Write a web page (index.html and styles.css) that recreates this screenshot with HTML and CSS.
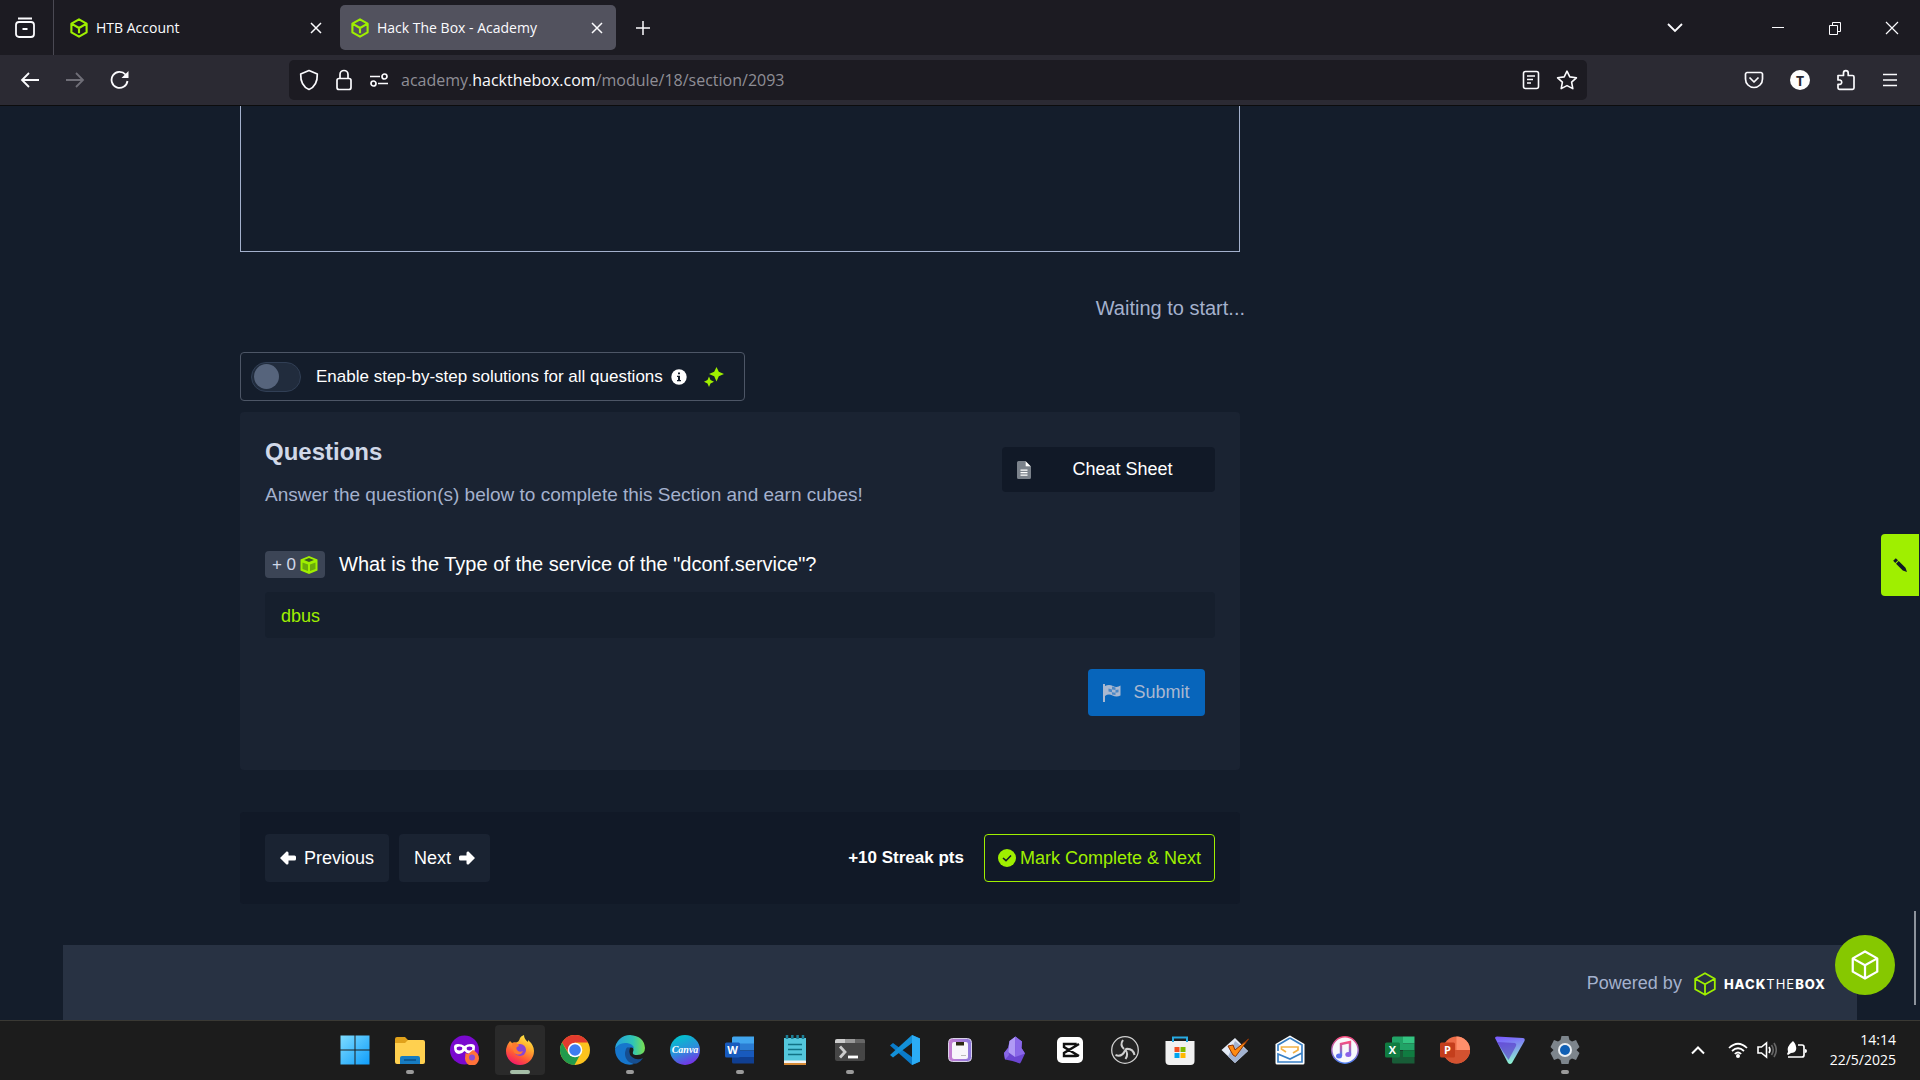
FILE: index.html
```html
<!DOCTYPE html>
<html lang="en">
<head>
    <meta charset="UTF-8">
    <meta name="viewport" content="width=device-width, initial-scale=1.0">
    <title>Hack The Box - Academy</title>
    <link rel="stylesheet" href="styles.css">
</head>
<body>

    <!-- shared shapes -->
    <svg class="defs" aria-hidden="true">
        <symbol id="cube" viewBox="0 0 22 24">
            <path d="M11 1.5 20.3 6.7V17.3L11 22.5 1.7 17.3V6.7ZM1.7 6.7 11 12 20.3 6.7M11 12V18.5" fill="none" stroke="currentColor" stroke-width="2.6" stroke-linejoin="round"/>
        </symbol>
        <symbol id="cube-thin" viewBox="0 0 22 24">
            <path d="M11 1.2 20.8 6.7V17.3L11 22.8 1.2 17.3V6.7ZM1.2 6.7 11 12.2 20.8 6.7M11 12.2V22.8" fill="none" stroke="currentColor" stroke-width="1.8" stroke-linejoin="round"/>
        </symbol>
        <symbol id="close" viewBox="0 0 14 14">
            <path d="M2 2 12 12M12 2 2 12" fill="none" stroke="currentColor" stroke-width="1.5"/>
        </symbol>
    </svg>

    <header class="browser">
        <div class="tabs">
            <button class="view-btn" aria-label="Firefox View">
                <svg width="22" height="22" viewBox="0 0 22 22" fill="none" stroke="currentColor" stroke-width="1.8"><path d="M4 1.5H18M8.500 12H13.500"/><rect x="2" y="5" width="18" height="15" rx="3"/></svg>
            </button>
            <div class="tab">
                <svg class="favicon" width="18" height="20"><use href="#cube"/></svg>
                <span>HTB Account</span>
                <button aria-label="Close tab"><svg width="14" height="14"><use href="#close"/></svg></button>
            </div>
            <div class="tab active">
                <svg class="favicon" width="18" height="20"><use href="#cube"/></svg>
                <span>Hack The Box - Academy</span>
                <button aria-label="Close tab"><svg width="14" height="14"><use href="#close"/></svg></button>
            </div>
            <button class="new-tab" aria-label="New tab">
                <svg width="16" height="16" viewBox="0 0 16 16" stroke="currentColor" stroke-width="1.5"><path d="M8 1V15M1 8H15"/></svg>
            </button>
            <div class="window-buttons">
                <button aria-label="List all tabs"><svg width="18" height="12" viewBox="0 0 18 12" fill="none" stroke="currentColor" stroke-width="1.8"><path d="M2 2 9 9 16 2"/></svg></button>
                <button aria-label="Minimise"><svg width="14" height="14" viewBox="0 0 14 14" stroke="currentColor"><path d="M1 6.500H13"/></svg></button>
                <button aria-label="Restore"><svg width="14" height="14" viewBox="0 0 14 14" fill="none" stroke="currentColor"><path d="M1.500 4.500H9.500V13.500H1.500ZM4.500 4.500V1.500H12.500V10.500H9.500"/></svg></button>
                <button aria-label="Close"><svg width="14" height="14" viewBox="0 0 14 14" stroke="currentColor" stroke-width="1.200"><path d="M1 1 13 13M13 1 1 13"/></svg></button>
            </div>
        </div>
        <div class="toolbar">
            <div class="nav-buttons">
                <button aria-label="Back"><svg width="20" height="20" viewBox="0 0 20 20" fill="none" stroke="currentColor" stroke-width="1.8"><path d="M19 10H2M9 3 2 10 9 17"/></svg></button>
                <button class="dim" aria-label="Forward"><svg width="20" height="20" viewBox="0 0 20 20" fill="none" stroke="currentColor" stroke-width="1.8"><path d="M1 10H18M11 3 18 10 11 17"/></svg></button>
                <button aria-label="Reload"><svg width="20" height="20" viewBox="0 0 20 20" fill="none" stroke="currentColor" stroke-width="1.8"><path d="M17.500 11A8 8 0 1 1 15.500 4.500L17 6"/><path d="M18.500 1V8H11.500Z" fill="currentColor" stroke="none"/></svg></button>
            </div>
            <div class="url-bar">
                <svg width="20" height="22" viewBox="0 0 20 22" fill="none" stroke="currentColor" stroke-width="1.7" stroke-linejoin="round"><path d="M10 1.500 18.300 5C18.500 12 16 18 10 20.500 4 18 1.500 12 1.700 5Z"/></svg>
                <svg class="lock" width="18" height="22" viewBox="0 0 18 22" fill="none" stroke="currentColor" stroke-width="1.7"><rect x="2" y="9.500" width="14" height="11" rx="2"/><path d="M5 9.500V5.500A4 4 0 0 1 13 5.500V9.500"/></svg>
                <svg class="perms" width="20" height="16" viewBox="0 0 20 16" fill="none" stroke="currentColor" stroke-width="1.7"><path d="M1 4.500H11M9 11.500H19"/><circle cx="15.500" cy="4.500" r="2.500"/><circle cx="4.500" cy="11.500" r="2.500"/></svg>
                <span class="url">academy.<b>hackthebox.com</b>/module/18/section/2093</span>
                <button aria-label="Reader view"><svg width="18" height="20" viewBox="0 0 18 20" fill="none" stroke="currentColor" stroke-width="1.6"><rect x="1.500" y="1.500" width="15" height="17" rx="2"/><path d="M5 6H13M5 9.500H11M5 13H9"/></svg></button>
                <button aria-label="Bookmark"><svg width="22" height="20" viewBox="0 0 22 20" fill="none" stroke="currentColor" stroke-width="1.6" stroke-linejoin="round"><path d="M11 1.200 13.800 6.900 20.400 7.800 15.600 12.200 16.800 18.600 11 15.600 5.200 18.600 6.400 12.200 1.600 7.800 8.200 6.900Z"/></svg></button>
            </div>
            <div class="tools">
                <button aria-label="Pocket"><svg width="20" height="18" viewBox="0 0 20 18" fill="none" stroke="currentColor" stroke-width="1.7" stroke-linejoin="round"><path d="M3 1.500H17A2 2 0 0 1 18.500 3V8A8.500 8.500 0 0 1 1.500 8V3A2 2 0 0 1 3 1.500ZM5.500 6.500 10 11 14.500 6.500"/></svg></button>
                <button class="account" aria-label="Account">T</button>
                <button aria-label="Extensions"><svg width="20" height="22" viewBox="0 0 20 22" fill="none" stroke="currentColor" stroke-width="1.7" stroke-linejoin="round"><path d="M2 6.500H7.500V4A2.300 2.300 0 0 1 12.200 4V6.500H16.500Q18 6.500 18 8V19Q18 20.300 16.500 20.300H3.500Q2 20.300 2 19V15.300H4A2.200 2.200 0 0 0 4 11H2Z"/></svg></button>
                <button aria-label="Menu"><svg width="16" height="16" viewBox="0 0 16 16" stroke="currentColor" stroke-width="1.500"><path d="M1 2.500H15M1 8H15M1 13.500H15"/></svg></button>
            </div>
        </div>
    </header>

    <main class="page">
        <div class="content">
            <div class="instance-frame"></div>
            <p class="waiting">Waiting to start...</p>

            <label class="solutions" for="solutions">
                <input type="checkbox" id="solutions">
                <span>Enable step-by-step solutions for all questions</span>
                <svg class="info" width="16" height="16" viewBox="0 0 16 16"><circle cx="8" cy="8" r="7.700" fill="#fff"/><path d="M7 3.500H9V5.300H7ZM6 6.700H9V11H10V12.300H6V11H7V8H6Z" fill="#141d2b"/></svg>
                <svg width="20" height="20" viewBox="0 0 20 20" fill="#9fef00"><path d="M12.500 0 14.800 4.700 20 7 14.800 9.300 12.500 14.500 10.200 9.300 5 7 10.200 4.700ZM5 9.500 6.500 13 10 14.700 6.500 16.400 5 20 3.500 16.400 0 14.700 3.500 13Z"/></svg>
            </label>

            <section class="questions">
                <div class="questions-head">
                    <div>
                        <h2>Questions</h2>
                        <p>Answer the question(s) below to complete this Section and earn cubes!</p>
                    </div>
                    <button class="cheat-sheet">
                        <svg width="14" height="18" viewBox="0 0 14 18"><path d="M1.500 0H8.500V5.500H14V16.500Q14 18 12.500 18H1.500Q0 18 0 16.500V1.500Q0 0 1.500 0Z" fill="#7b828b"/><path d="M8.500 0 14 5.500H8.500ZM3.500 8.500H10.500V9.700H3.500ZM3.500 11H10.500V12.200H3.500ZM3.500 13.500H10.500V14.700H3.500Z" fill="#fff"/></svg>
                        <span>Cheat Sheet</span>
                    </button>
                </div>
                <div class="question">
                    <span class="cubes">+ 0
                        <svg width="18" height="18" viewBox="0 0 18 18"><path d="M9 0 17.500 3.500V14.500L9 18 .5 14.500V3.500Z" fill="#9fef00"/><path d="M9 2 14 4 9 6 4 4Z" fill="#3c5a20"/><path d="M2.500 6.500 8 8.500V15L2.500 13ZM15.500 6.500 10 8.500V15L15.500 13Z" fill="#6bab0b"/></svg>
                    </span>
                    <label for="answer">What is the Type of the service of the "dconf.service"?</label>
                </div>
                <input class="answer" type="text" id="answer" value="dbus">
                <button class="submit">
                    <svg width="18" height="18" viewBox="0 0 18 18" fill="currentColor"><path d="M0 0H2V18H0Z"/><path d="M2 2Q6 0 10 2T17.500 1.500V11.500Q13.500 13.500 9.500 11.500T2 12Z"/><path d="M5.500 4.500 9 5.500V8.300L5.500 7.500ZM9 2.500 12.500 3.500V6L9 5.500ZM12.500 6 15.500 5.500V8.300L12.500 8.700ZM9 8.300 12.500 8.700V11L9 10.500Z" fill="#0b68bf" opacity=".6"/></svg>
                    Submit
                </button>
            </section>

            <nav class="section-nav">
                <button>
                    <svg width="16" height="14" viewBox="0 0 16 14" fill="currentColor"><path d="M0 7 6.500 .5Q8.500 0 8.500 2V4.500H14.500Q16 4.500 16 6V8Q16 9.500 14.500 9.500H8.500V12Q8.500 14 6.500 13.500Z"/></svg>
                    Previous
                </button>
                <button>
                    Next
                    <svg width="16" height="14" viewBox="0 0 16 14" fill="currentColor"><path d="M16 7 9.500 .5Q7.500 0 7.500 2V4.500H1.500Q0 4.500 0 6V8Q0 9.500 1.500 9.500H7.500V12Q7.500 14 9.500 13.500Z"/></svg>
                </button>
                <span class="streak">+10 Streak pts</span>
                <button class="complete">
                    <svg width="18" height="18" viewBox="0 0 18 18"><circle cx="9" cy="9" r="9" fill="#9fef00"/><path d="M5 9 8 11.700 13 6.500" fill="none" stroke="#111927" stroke-width="1.600"/></svg>
                    Mark Complete &amp; Next
                </button>
            </nav>
        </div>

        <footer>
            <span>Powered by</span>
            <a href="#" class="brand">
                <svg width="22" height="24"><use href="#cube-thin"/></svg>
                <span><b>HACK</b>THE<b>BOX</b></span>
            </a>
        </footer>

        <button class="notes" aria-label="Notes">
            <svg width="16" height="16" viewBox="0 0 16 16" fill="#111927"><path d="M1.200 3.800 3.800 1.200 6 3.200 3.300 6ZM4 6.700 6.700 4 13.500 10.700 15 15 10.800 13.500Z"/></svg>
        </button>
        <button class="help" aria-label="Help">
            <svg width="28" height="30"><use href="#cube-thin"/></svg>
        </button>
        <div class="scroll-thumb"></div>
    </main>

    <div class="taskbar">
        <div class="apps">
            <button aria-label="Start"><svg viewBox="0 0 30 30"><defs><linearGradient id="win" x1="0" y1="0" x2="1" y2="1"><stop stop-color="#7edcff"/><stop offset="1" stop-color="#0f9dfa"/></linearGradient></defs><path d="M.5 .5H14.500V14.500H.5ZM15.500 .5H29.500V14.500H15.500ZM.5 15.500H14.500V29.500H.5ZM15.500 15.500H29.500V29.500H15.500Z" fill="url(#win)"/></svg></button>
            <button class="open" aria-label="File Explorer"><svg viewBox="0 0 30 30"><path d="M0 4Q0 2 2 2H10L13 5H20V12H0Z" fill="#e0a11b"/><path d="M0 8H10L13 5H28Q30 5 30 7V27Q30 29 28 29H2Q0 29 0 27Z" fill="#ffd04f"/><path d="M5 29V23Q5 21 7 21H23Q25 21 25 23V29Z" fill="#177cc2"/><path d="M9 25H21" stroke="#0b4f86" stroke-width="1.500"/></svg></button>
            <button aria-label="Firefox Private Browsing"><svg viewBox="0 0 30 30"><circle cx="14.500" cy="15" r="14.500" fill="#7a09cf"/><path d="M4 12Q4 9 8 9 12 9 14.500 11 17 9 21 9 25 9 25 12 25 19 20 19 17 19 14.500 16 12 19 9 19 4 19 4 12Z" fill="#fff"/><ellipse cx="9.500" cy="13.500" rx="2.800" ry="1.900" fill="#7a09cf"/><ellipse cx="19.500" cy="13.500" rx="2.800" ry="1.900" fill="#7a09cf"/><path d="M15.500 18 18 19 23 15Q29 18 29 23.500A7 7 0 0 1 15 23.500Z" fill="#ff7139"/><circle cx="22" cy="22.500" r="3" fill="#8a4bd6"/></svg></button>
            <button class="open current" aria-label="Firefox"><svg viewBox="0 0 30 30"><defs><linearGradient id="fox" x1=".8" y1="0" x2=".3" y2="1"><stop stop-color="#fff04a"/><stop offset=".35" stop-color="#ffb02e"/><stop offset=".7" stop-color="#ff5a36"/><stop offset="1" stop-color="#f5156c"/></linearGradient></defs><path d="M5 6 7 8Q10 7 11 7.500 14 7 15 3 16 1 19 0 19 4 23 7L23 5Q29 10 29 16A14 14 0 0 1 1 16Q1 11 5 6Z" fill="url(#fox)"/><circle cx="15" cy="15" r="6" fill="#8946d4"/><path d="M7 8Q12 7 14 11 10 12 12 15 14 18 18 16 16 21 11 19 7 17 7 8Z" fill="#ff7a2e"/></svg></button>
            <button aria-label="Chrome"><svg viewBox="0 0 30 30"><circle cx="15" cy="15" r="15" fill="#fcc31e"/><path d="M2 7.500A15 15 0 0 1 28 7.500H15L9 18.500Z" fill="#e33b2e"/><path d="M2 7.500 8.500 18.700 15 22.500 13.700 30A15 15 0 0 1 2 7.500Z" fill="#219a4c"/><path d="M20.500 19 14.500 30Q10 28 10 22Z" fill="#219a4c"/><circle cx="15" cy="15" r="7.300" fill="#fff"/><circle cx="15" cy="15" r="5.800" fill="#3d7df0"/></svg></button>
            <button class="open" aria-label="Edge"><svg viewBox="0 0 30 30"><defs><linearGradient id="edge"><stop stop-color="#249fe0"/><stop offset=".6" stop-color="#2fc5b5"/><stop offset="1" stop-color="#7be04f"/></linearGradient></defs><path d="M0 14A15 15 0 0 1 15 0Q29 1 30 13 30 20 22 20 17 20 18 17 20 12 14 10 5 8 0 14Z" fill="url(#edge)"/><path d="M0 14Q4 7 12 8 18 9 19 13 13 11 11 17 10 25 19 29 12 31 6 27 0 22 0 14Z" fill="#1676cc"/><path d="M11 14Q8 22 14 27 22 32 28 23 22 26 17 22 13 19 15 13 12 11 11 14Z" fill="#164f91"/></svg></button>
            <button aria-label="Canva"><svg viewBox="0 0 30 30"><defs><linearGradient id="canva" x1=".3" y1="0" x2=".7" y2="1"><stop stop-color="#00c4cc"/><stop offset=".5" stop-color="#2b8fdb"/><stop offset="1" stop-color="#7d2ae8"/></linearGradient></defs><circle cx="15" cy="15" r="15" fill="url(#canva)"/><text x="15" y="18" class="canva-text">Canva</text></svg></button>
            <button class="open" aria-label="Word"><svg viewBox="0 0 30 30"><path d="M7 3Q7 1.500 8.500 1.500H29V9H7Z" fill="#41a5ee"/><path d="M7 8.500H29V15.500H7Z" fill="#2b7cd3"/><path d="M7 15.500H29V22H7Z" fill="#185abd"/><path d="M7 22H29V28.500H8.500Q7 28.500 7 27Z" fill="#103f91"/><rect y="7.500" width="15" height="15" rx="1.500" fill="#185abd"/><text x="7.500" y="19" class="office-text">W</text></svg></button>
            <button aria-label="Notepad"><svg viewBox="0 0 30 30"><path d="M4 26H26V30H4Z" fill="#d68a35"/><path d="M4 3H26V25L25 28H4Z" fill="#54c7dc"/><path d="M4 25.500H26V28H4Z" fill="#f4f4f4"/><path d="M8 9.500H22M8 14.500H22M8 19.500H22" stroke="#117285" stroke-width="1.600"/><path d="M7 0V4M12.300 0V4M17.600 0V4M23 0V4" stroke="#1c7f97" stroke-width="2.500"/></svg></button>
            <button class="open" aria-label="Terminal"><svg viewBox="0 0 30 30"><rect y="4" width="30" height="22" rx="2" fill="#464646"/><path d="M0 8V6Q0 4 2 4H10V8Z" fill="#ccc"/><path d="M10 4H20V8H10Z" fill="#999"/><path d="M20 4H28Q30 4 30 6V8H20Z" fill="#666"/><path d="M5 11.500 10 17 5 22.500" fill="none" stroke="#ccc" stroke-width="2.800"/><path d="M13 22H23" stroke="#fff" stroke-width="2.800"/></svg></button>
            <button aria-label="Visual Studio Code"><svg viewBox="0 0 30 30"><path d="M22 0 30 3.500V26.500L22 30 0 10.500 3 8 22 22Z" fill="#0a7bc9"/><path d="M22 0V8L3 22.500 0 20Z" fill="#1390d8"/><path d="M22 0 30 3.500V26.500L22 30Z" fill="#2bacf5"/></svg></button>
            <button aria-label="Emulator"><svg viewBox="0 0 30 30"><defs><linearGradient id="emu"><stop stop-color="#c77dd0"/><stop offset="1" stop-color="#8a78dc"/></linearGradient></defs><rect x="3.500" y="3.500" width="23" height="23" rx="4" fill="url(#emu)" stroke="#d9d2e8"/><rect x="7" y="7" width="16" height="17" rx="2" fill="#f7f5fa"/><path d="M11 7H19V10.500H11Z" fill="#2b2813"/><path d="M16 20.500H21" stroke="#bbb"/></svg></button>
            <button aria-label="Obsidian"><svg viewBox="0 0 30 30"><path d="M15.500 1.500 22 6.500 21.500 13 25 18.500 21 27 20 28.500 12.500 26 5 24.500 4 18 8 13 9.500 6Z" fill="#6c46d2"/><path d="M15.500 1.500 9.500 6 8 17 15 22Z" fill="#b09af5"/><path d="M15.500 1.500 22 6.500 21.500 13 25 18.500 15 22Z" fill="#8a68e8"/><path d="M4 18 8 13 9 20 5 24.500Z" fill="#8767e5"/></svg></button>
            <button aria-label="CapCut"><svg viewBox="0 0 30 30"><rect x="2" y="2" width="26" height="26" rx="5" fill="#fff"/><path d="M24 9 9 18V21H20.500V18.500M24 21 9 12V9H20.500V11.500" fill="none" stroke="#111" stroke-width="2.400"/></svg></button>
            <button aria-label="OBS Studio"><svg viewBox="0 0 30 30"><circle cx="15" cy="15" r="13.300" fill="#242424" stroke="#d0d0d0" stroke-width="1.300"/><path d="M13 5Q9.500 10 14 14M5.500 20Q12 22.500 15 15.500M24.500 20Q23 13 15.500 14M15 14Q19 19 15.500 24" fill="none" stroke="#d0d0d0" stroke-width="2"/></svg></button>
            <button aria-label="Microsoft Store"><svg viewBox="0 0 30 30"><path d="M.5 6H29.500V26Q29.500 30 25.500 30H4.500Q.5 30 .5 26Z" fill="#f1f1f1"/><path d="M8 7V2.500H22V7" fill="none" stroke="#27a9e1" stroke-width="2"/><path d="M9.500 12H14.500V17H9.500Z" fill="#f25022"/><path d="M15.500 12H20.500V17H15.500Z" fill="#7fba00"/><path d="M9.500 18H14.500V23H9.500Z" fill="#00a4ef"/><path d="M15.500 18H20.500V23H15.500Z" fill="#ffb900"/></svg></button>
            <button aria-label="Tasks"><svg viewBox="0 0 30 30"><path d="M15 3 28 16 15 28 1.500 15Z" fill="#e4ebf6"/><path d="M15 6 28 16 15 28 8 21.500Z" fill="#a3b3d0"/><path d="M8 11 13 10 15 15 28.500 4 15.500 21.500 13 20Z" fill="#ff8a10" stroke="#8e3507"/></svg></button>
            <button aria-label="Mail"><svg viewBox="0 0 30 30"><path d="M15 .5 29.500 9V28Q29.500 29.500 28 29.500H2Q.5 29.500 .5 28V9Z" fill="#fff"/><path d="M15 3 27 10V27H3V19L15 24 27 18M3 16V10L15 3" fill="none" stroke="#3980c6" stroke-width="1.700"/><path d="M11 17 6.500 14V12H23V15L18 18" fill="none" stroke="#f4b248" stroke-width="1.700"/></svg></button>
            <button aria-label="iTunes"><svg viewBox="0 0 30 30"><defs><linearGradient id="tune" x1="0" y1="0" x2="0" y2="1"><stop stop-color="#f94d7f"/><stop offset="1" stop-color="#4b7ff2"/></linearGradient></defs><circle cx="15" cy="15" r="13.200" fill="#f8f8fb" stroke="url(#tune)" stroke-width="1.500"/><path d="M11 21V9L20 7V19" fill="none" stroke="url(#tune)" stroke-width="2.400"/><ellipse cx="9" cy="21" rx="3" ry="2.500" fill="#5a6ff0"/><ellipse cx="18.300" cy="19.500" rx="3" ry="2.500" fill="#8d62e8"/></svg></button>
            <button aria-label="Excel"><svg viewBox="0 0 30 30"><path d="M7 3Q7 1.500 8.500 1.500H18V15H7Z" fill="#21a366"/><path d="M18 1.500H29.500V8.500H18Z" fill="#33c481"/><path d="M18 8.500H29.500V15.500H18Z" fill="#21a366"/><path d="M7 15.500H29.500V28.500H8.500Q7 28.500 7 27Z" fill="#185c37"/><path d="M18 15.500H29.500V22H18Z" fill="#107c41"/><rect y="7.500" width="15" height="15" rx="1.500" fill="#107c41"/><text x="7.500" y="19" class="office-text">X</text></svg></button>
            <button aria-label="PowerPoint"><svg viewBox="0 0 30 30"><circle cx="16.500" cy="15" r="13.500" fill="#ed6c47"/><path d="M16.500 1.500A13.500 13.500 0 0 1 30 15H16.500Z" fill="#ff8f6b"/><path d="M3 15H30A13.500 13.500 0 0 1 3 15Z" fill="#d35230"/><rect y="7.500" width="15" height="15" rx="1.500" fill="#c43e1c"/><text x="7.500" y="19" class="office-text">P</text></svg></button>
            <button aria-label="Proton VPN"><svg viewBox="0 0 30 30"><defs><linearGradient id="vpn" x1=".3" y1="0" x2=".5" y2="1"><stop stop-color="#7a5cff"/><stop offset="1" stop-color="#8df5cf"/></linearGradient></defs><path d="M0 3Q0 1.500 2 1.500L28 3Q30.500 3.500 29.500 6L17 28Q15 30 13 28Z" fill="url(#vpn)"/><path d="M2 7 20 8Q22 9 21 11L13.500 25Z" fill="#5535c4" opacity=".6"/></svg></button>
            <button class="open" aria-label="Settings"><svg viewBox="0 0 30 30"><path d="M11.500 1H18.500L19.500 5 22 6.500 26 5 29.500 12 26.500 15 29.500 18 26 25 22 23.500 19.500 25 18.500 29H11.500L10.500 25 8 23.500 4 25 .5 18 3.500 15 .5 12 4 5 8 6.500 10.500 5Z" fill="#7d858c"/><circle cx="15" cy="15" r="7" fill="#e9eef2"/><circle cx="15" cy="15" r="5" fill="#0f5fb4"/></svg></button>
        </div>
        <div class="tray">
            <svg width="16" height="12" viewBox="0 0 16 12" fill="none" stroke="currentColor" stroke-width="2"><path d="M2 9.500 8 3.500 14 9.500"/></svg>
            <svg class="wifi" width="20" height="16" viewBox="0 0 20 16" fill="none" stroke="currentColor" stroke-width="1.700"><path d="M1 6Q10-2.500 19 6M4 9Q10 3.500 16 9M6.800 12Q10 9 13.200 12"/><circle cx="10" cy="14" r="2" fill="currentColor" stroke="none"/></svg>
            <svg width="20" height="18" viewBox="0 0 20 18" fill="none" stroke="currentColor" stroke-width="1.600"><path d="M1 6H4.500L9.500 2V16L4.500 12H1Z"/><path d="M12 6Q14 9 12 12"/><path d="M14.500 4Q18 9 14.500 14M17 2Q21.500 9 17 16" stroke="#666"/></svg>
            <svg width="22" height="18" viewBox="0 0 22 18"><path d="M12 4H16Q18 4 18 6V14Q18 16 16 16H2" fill="none" stroke="currentColor" stroke-width="1.700"/><path d="M19 8Q21 8 21 10T19 12ZM7 0Q11 4 10 9 9 12 5 12L2 14 1 13 2 11Q0 6 7 0Z" fill="currentColor"/></svg>
            <div class="clock">14:14<br>22/5/2025</div>
        </div>
    </div>

</body>
</html>
```
FILE: styles.css
```css
* {
    box-sizing: border-box;
}

body {
    margin: 0;
    height: 100vh;
    display: flex;
    flex-direction: column;
    overflow: hidden;
    background-color: #141d2b;
    color: #a4b1cd;
    font-family: "Liberation Sans", Arial, sans-serif;
    font-size: 18px;
}

button {
    display: flex;
    align-items: center;
    justify-content: center;
    padding: 0;
    border: none;
    background: none;
    color: inherit;
    font: inherit;
    cursor: pointer;
}

svg {
    display: block;
    flex: none;
}

h2,
p {
    margin: 0;
}

.defs {
    position: absolute;
    width: 0;
    height: 0;
}

/* browser chrome */
.browser {
    color: #fbfbfe;
    font-family: "Open Sans", "Noto Sans", sans-serif;
    font-size: 14px;
    border-bottom: 1px solid #0c0c0d;
}

.tabs {
    display: flex;
    align-items: center;
    height: 55px;
    background-color: #1c1b22;
}

.view-btn {
    width: 54px;
    height: 55px;
    padding-right: 4px;
    border-right: 1px solid #4a4953;
}

.tab {
    display: flex;
    align-items: center;
    gap: 8px;
    width: 276px;
    height: 45px;
    margin-left: 5px;
    padding: 0 12px 0 11px;
    border-radius: 5px;
}

.tab.active {
    background-color: #52525e;
}

.tab span {
    flex: 1;
}

.favicon {
    color: #9fef00;
}

.new-tab {
    width: 44px;
    height: 40px;
    margin-left: 5px;
}

.window-buttons {
    display: flex;
    margin-left: auto;
}

.window-buttons button {
    width: 57px;
    height: 55px;
}

.window-buttons button:first-child {
    margin-right: 46px;
}

.toolbar {
    display: flex;
    align-items: center;
    height: 50px;
    padding-left: 20px;
    background-color: #2b2a33;
}

.nav-buttons {
    display: flex;
    gap: 25px;
    width: 269px;
}

.dim {
    color: #6f6e77;
}

.url-bar {
    display: flex;
    align-items: center;
    flex: 1;
    gap: 16px;
    height: 40px;
    padding: 0 9px 0 10px;
    border-radius: 5px;
    background-color: #1c1b22;
}

.url {
    flex: 1;
    margin-left: -4px;
    color: #8f8e96;
    font-size: 16px;
}

.url b {
    color: #fbfbfe;
    font-weight: normal;
}

.tools {
    display: flex;
    align-items: center;
    justify-content: flex-end;
    gap: 26px;
    width: 333px;
    padding-right: 22px;
}

.account {
    width: 20px;
    height: 20px;
    border-radius: 50%;
    background-color: #fff;
    color: #2b2a33;
    font-size: 14px;
    font-weight: bold;
}

/* academy page */
.page {
    position: relative;
    display: flex;
    flex-direction: column;
    flex: 1;
    min-height: 0;
    overflow: hidden;
}

.content {
    margin: 0 680px 0 240px;
}

.instance-frame {
    height: 146px;
    border: 1px solid #a4b1cd;
    border-top: none;
}

.waiting {
    margin: 41px -5px 0 0;
    text-align: right;
    font-size: 20px;
    line-height: 30px;
}

.solutions {
    display: flex;
    align-items: center;
    width: fit-content;
    height: 49px;
    margin-top: 29px;
    padding: 0 20px 0 10px;
    border: 1px solid #4d5666;
    border-radius: 4px;
    color: #fff;
    font-size: 17px;
}

.solutions input {
    appearance: none;
    display: flex;
    align-items: center;
    width: 50px;
    height: 30px;
    margin: 0 15px 0 0;
    padding: 0 2px;
    border: 1px solid #313f55;
    border-radius: 15px;
    background-color: #212c3d;
}

.solutions input::before {
    content: "";
    width: 25px;
    height: 25px;
    border-radius: 50%;
    background-color: #56647c;
}

.solutions input:checked {
    justify-content: flex-end;
}

.info {
    margin: 0 17px 0 8px;
}

.questions {
    display: flex;
    flex-direction: column;
    margin-top: 11px;
    padding: 25px 25px 54px;
    border-radius: 4px;
    background-color: #1a2332;
}

.questions-head {
    display: flex;
    align-items: flex-start;
    justify-content: space-between;
}

.questions h2 {
    color: #d0d8e8;
    font-size: 24px;
    line-height: 30px;
}

.questions p {
    margin-top: 14px;
    font-size: 19px;
    line-height: 28px;
}

.cheat-sheet {
    width: 213px;
    height: 45px;
    margin-top: 10px;
    padding: 0 15px;
    border-radius: 4px;
    background-color: #111927;
    color: #fff;
}

.cheat-sheet span {
    flex: 1;
    padding-left: 14px;
}

.question {
    display: flex;
    align-items: center;
    gap: 14px;
    margin-top: 42px;
    color: #fff;
    font-size: 20px;
    line-height: 27px;
}

.cubes {
    display: flex;
    align-items: center;
    justify-content: center;
    gap: 4px;
    width: 60px;
    border-radius: 4px;
    background-color: #3c4556;
    color: #d0d8e8;
    font-size: 17px;
}

.answer {
    height: 46px;
    margin-top: 14px;
    padding: 2px 16px 0;
    border: none;
    border-radius: 4px;
    background-color: #161f2d;
    color: #9fef00;
    font: inherit;
}

.submit {
    align-self: flex-end;
    gap: 12px;
    width: 117px;
    height: 47px;
    margin: 31px 10px 0 0;
    border-radius: 4px;
    background-color: #0765bb;
    color: #a9b8d0;
}

.section-nav {
    display: flex;
    align-items: center;
    gap: 10px;
    margin-top: 42px;
    padding: 22px 25px;
    border-radius: 4px;
    background-color: #111927;
    color: #fff;
}

.section-nav button {
    gap: 8px;
    height: 48px;
    padding: 0 15px;
    border-radius: 4px;
    background-color: #1a2332;
}

.streak {
    margin: 0 10px 0 auto;
    font-size: 17px;
    font-weight: bold;
}

.section-nav .complete {
    gap: 4px;
    padding: 0 13px;
    border: 1px solid #9fef00;
    background: none;
    color: #9fef00;
}

footer {
    display: flex;
    align-items: center;
    justify-content: flex-end;
    gap: 12px;
    flex: 1;
    margin: 41px 63px 0;
    padding: 2px 31px 0 0;
    background-color: #283243;
}

.brand {
    display: flex;
    align-items: center;
    gap: 8px;
    color: #9fef00;
    text-decoration: none;
}

.brand span {
    color: #fff;
    font-family: Inter, sans-serif;
    font-size: 13px;
    letter-spacing: 1px;
}

.brand b {
    font-weight: 800;
}

.notes {
    position: absolute;
    top: 428px;
    right: 1px;
    width: 38px;
    height: 62px;
    border-radius: 4px 0 0 4px;
    background-color: #9fef00;
}

.help {
    position: absolute;
    right: 25px;
    bottom: 25px;
    width: 60px;
    height: 60px;
    border-radius: 50%;
    background-color: #86c800;
    color: #fff;
}

.scroll-thumb {
    position: absolute;
    right: 4px;
    bottom: 15px;
    width: 2px;
    height: 94px;
    background-color: #8d939c;
}

/* windows taskbar */
.taskbar {
    display: grid;
    grid-template-columns: 1fr auto 1fr;
    align-items: center;
    height: 60px;
    padding-bottom: 1px;
    border-top: 1px solid #3a3934;
    background-color: #1c1c1c;
    color: #fff;
}

.apps {
    display: flex;
    grid-column: 2;
    gap: 5px;
}

.apps button {
    position: relative;
    width: 50px;
    height: 50px;
    border-radius: 4px;
}

.apps svg {
    width: 30px;
    height: 30px;
}

.apps .current {
    background-color: #2a2a2a;
}

.apps .open::after {
    content: "";
    position: absolute;
    bottom: 1px;
    left: 21px;
    width: 8px;
    height: 4px;
    border-radius: 2px;
    background-color: #9a9a9a;
}

.apps .current::after {
    left: 15px;
    width: 20px;
    background-color: #a5bfa8;
}

.office-text {
    fill: #fff;
    font-family: "Open Sans", sans-serif;
    font-size: 11px;
    font-weight: bold;
    text-anchor: middle;
}

.canva-text {
    fill: #fff;
    font-family: "Liberation Serif", serif;
    font-size: 10px;
    font-style: italic;
    font-weight: bold;
    text-anchor: middle;
}

.tray {
    display: flex;
    align-items: center;
    justify-content: flex-end;
    gap: 9px;
    padding-right: 24px;
}

.wifi {
    margin-left: 13px;
}

.clock {
    margin-left: 13px;
    font-family: "Open Sans", "Noto Sans", sans-serif;
    font-size: 14px;
    line-height: 20px;
    text-align: right;
}
```
